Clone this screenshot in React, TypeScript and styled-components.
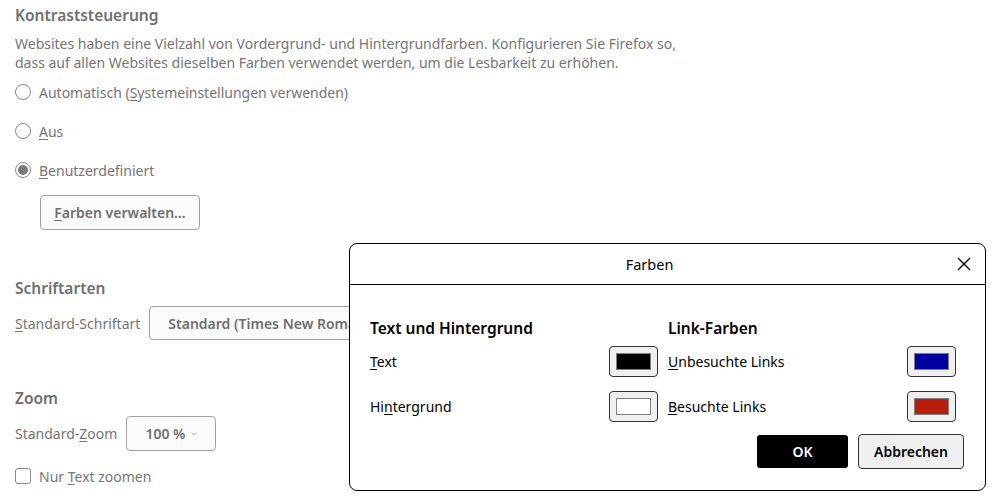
import React from "react";
import styled, {createGlobalStyle} from "styled-components";

const GlobalStyle = createGlobalStyle`
    html, body {
        margin: 0;
        background: #fff;
    }
    body {
        font-family: "Noto Sans", "Open Sans", sans-serif;
        font-size: 14px;
        color: #757575;
    }
`;

const Page = styled.div`
    position: relative;
    width: 993px;
    height: 501px;
    overflow: hidden;
    box-sizing: border-box;
    padding: 4px 15px 0;
`;

const Section = styled.section<{gap?: number}>`
    margin-top: ${({gap}) => gap || 0}px;
`;

const Heading = styled.h2`
    margin: 0;
    font-size: 15.5px;
    line-height: 22px;
    font-weight: 600;
    color: #6f6f6f;
`;

const Description = styled.p`
    margin: 8px 0 0;
    line-height: 19px;
    width: 690px;
`;

const Key = styled.u`
    text-underline-offset: 2px;
`;

const RadioGroup = styled.div`
    display: flex;
    flex-direction: column;
    gap: 15px;
    margin-top: 8px;
`;

const OptionRow = styled.label`
    display: flex;
    align-items: center;
    gap: 8px;
    height: 24px;
`;

const RadioDot = styled.span<{checked?: boolean}>`
    box-sizing: border-box;
    width: 16px;
    height: 16px;
    border-radius: 50%;
    border: 1px solid #8a8a8a;
    display: flex;
    align-items: center;
    justify-content: center;

    &::after {
        content: "";
        width: 10px;
        height: 10px;
        border-radius: 50%;
        background: ${({checked}) => (checked ? "#7a7a7a" : "transparent")};
    }
`;

const CheckBox = styled.span`
    box-sizing: border-box;
    width: 16px;
    height: 16px;
    border-radius: 3px;
    border: 1px solid #8a8a8a;
`;

const GhostButton = styled.button`
    margin: 13px 0 0 25px;
    width: 160px;
    height: 35px;
    padding: 0;
    border: 1px solid #a3a3a3;
    border-radius: 4px;
    background: #fbfbfb;
    font: inherit;
    font-weight: 600;
    color: #6f6f6f;
`;

const FieldRow = styled.div`
    display: flex;
    align-items: center;
    gap: 9px;
    margin-top: 7px;
`;

const Select = styled.div<{width: number; height?: number}>`
    box-sizing: border-box;
    height: ${({height}) => height || 34}px;
    width: ${({width}) => width}px;
    padding: 0 18px;
    display: flex;
    align-items: center;
    gap: 6px;
    border: 1px solid #a3a3a3;
    border-radius: 4px;
    background: #fbfbfb;
    font-weight: 600;
    color: #6f6f6f;
    white-space: nowrap;
`;

const CheckRow = styled(OptionRow)`
    margin-top: 13px;
`;

/* Modal color dialog */

const Dialog = styled.div`
    position: absolute;
    left: 349px;
    top: 243px;
    width: 637px;
    height: 248px;
    box-sizing: border-box;
    border: 1px solid #000;
    border-radius: 8px;
    background: #fff;
    color: #000;
    display: flex;
    flex-direction: column;
`;

const TitleBar = styled.div`
    height: 40px;
    display: flex;
    align-items: center;
    border-bottom: 1px solid #000;
`;

const Title = styled.div`
    flex: 1;
    text-align: center;
    font-size: 14.5px;
`;

const CloseButton = styled.button`
    width: 30px;
    height: 30px;
    margin-right: 6px;
    border: 0;
    background: transparent;
    display: flex;
    align-items: center;
    justify-content: center;
    padding: 0;
`;

const DialogBody = styled.div`
    padding: 32px 21px 0 20px;
    display: grid;
    grid-template-columns: 289px 289px;
    column-gap: 9px;
`;

const Column = styled.div`
    display: flex;
    flex-direction: column;
`;

const ColumnTitle = styled.h3`
    margin: 0 0 7px;
    font-size: 15.5px;
    line-height: 22px;
    font-weight: 600;
`;

const ColorRow = styled.div`
    display: flex;
    align-items: center;
    justify-content: space-between;
    height: 31px;
    margin-bottom: 14px;
    padding-right: 1px;
`;

const Swatch = styled.button<{color: string}>`
    box-sizing: border-box;
    width: 49px;
    height: 31px;
    padding: 6px;
    border: 1px solid #333;
    border-radius: 4px;
    background: #efefef;
    display: flex;

    &::after {
        content: "";
        flex: 1;
        border: 1px solid #808080;
        background: ${({color}) => color};
    }
`;

const ButtonBar = styled.div`
    display: flex;
    justify-content: flex-end;
    gap: 10px;
    padding: 0 21px;
    margin-top: -2px;
`;

const PrimaryButton = styled.button`
    width: 91px;
    height: 33px;
    border: 0;
    border-radius: 3px;
    background: #000;
    color: #fff;
    font: inherit;
    font-weight: 600;
    margin-top: 1px;
`;

const SecondaryButton = styled.button`
    width: 106px;
    height: 35px;
    border: 1px solid #333;
    border-radius: 4px;
    background: #efefef;
    color: #000;
    font: inherit;
    font-weight: 600;
`;

const CloseIcon = () => (
    <svg width="14" height="14" viewBox="0 0 14 14">
        <path d="M1 1L13 13M13 1L1 13" stroke="#000" strokeWidth="1.3" />
    </svg>
);

const Chevron = () => (
    <svg width="9" height="6" viewBox="0 0 9 6">
        <path d="M1 1l3.5 3.5L8 1" stroke="#8a8a8a" fill="none" strokeWidth="1" />
    </svg>
);

export default function App() {
    return (
        <>
            <GlobalStyle />
            <Page>
                <Section>
                    <Heading>Kontraststeuerung</Heading>
                    <Description>
                        Websites haben eine Vielzahl von Vordergrund- und Hintergrundfarben. Konfigurieren Sie
                        Firefox so, dass auf allen Websites dieselben Farben verwendet werden, um die Lesbarkeit
                        zu erhöhen.
                    </Description>
                    <RadioGroup>
                        <OptionRow>
                            <RadioDot />
                            <span>
                                Automatisch (<Key>S</Key>ystemeinstellungen verwenden)
                            </span>
                        </OptionRow>
                        <OptionRow>
                            <RadioDot />
                            <span>
                                <Key>A</Key>us
                            </span>
                        </OptionRow>
                        <OptionRow>
                            <RadioDot checked />
                            <span>
                                <Key>B</Key>enutzerdefiniert
                            </span>
                        </OptionRow>
                    </RadioGroup>
                    <GhostButton>
                        <Key>F</Key>arben verwalten…
                    </GhostButton>
                </Section>

                <Section gap={47}>
                    <Heading>Schriftarten</Heading>
                    <FieldRow>
                        <span>
                            <Key>S</Key>tandard-Schriftart
                        </span>
                        <Select width={260}>Standard (Times New Roman)</Select>
                    </FieldRow>
                </Section>

                <Section gap={47}>
                    <Heading>Zoom</Heading>
                    <FieldRow>
                        <span>
                            Standard-<Key>Z</Key>oom
                        </span>
                        <Select width={90} height={35}>
                            100 % <Chevron />
                        </Select>
                    </FieldRow>
                    <CheckRow>
                        <CheckBox />
                        <span>
                            Nur <Key>T</Key>ext zoomen
                        </span>
                    </CheckRow>
                </Section>

                <Dialog>
                    <TitleBar>
                        <Title>Farben</Title>
                        <CloseButton aria-label="Schließen">
                            <CloseIcon />
                        </CloseButton>
                    </TitleBar>
                    <DialogBody>
                        <Column>
                            <ColumnTitle>Text und Hintergrund</ColumnTitle>
                            <ColorRow>
                                <span>
                                    <Key>T</Key>ext
                                </span>
                                <Swatch color="#000" />
                            </ColorRow>
                            <ColorRow>
                                <span>
                                    Hi<Key>n</Key>tergrund
                                </span>
                                <Swatch color="#fff" />
                            </ColorRow>
                        </Column>
                        <Column>
                            <ColumnTitle>Link-Farben</ColumnTitle>
                            <ColorRow>
                                <span>
                                    <Key>U</Key>nbesuchte Links
                                </span>
                                <Swatch color="#0000a0" />
                            </ColorRow>
                            <ColorRow>
                                <span>
                                    <Key>B</Key>esuchte Links
                                </span>
                                <Swatch color="#b81e0a" />
                            </ColorRow>
                        </Column>
                    </DialogBody>
                    <ButtonBar>
                        <PrimaryButton>OK</PrimaryButton>
                        <SecondaryButton>Abbrechen</SecondaryButton>
                    </ButtonBar>
                </Dialog>
            </Page>
        </>
    );
}
